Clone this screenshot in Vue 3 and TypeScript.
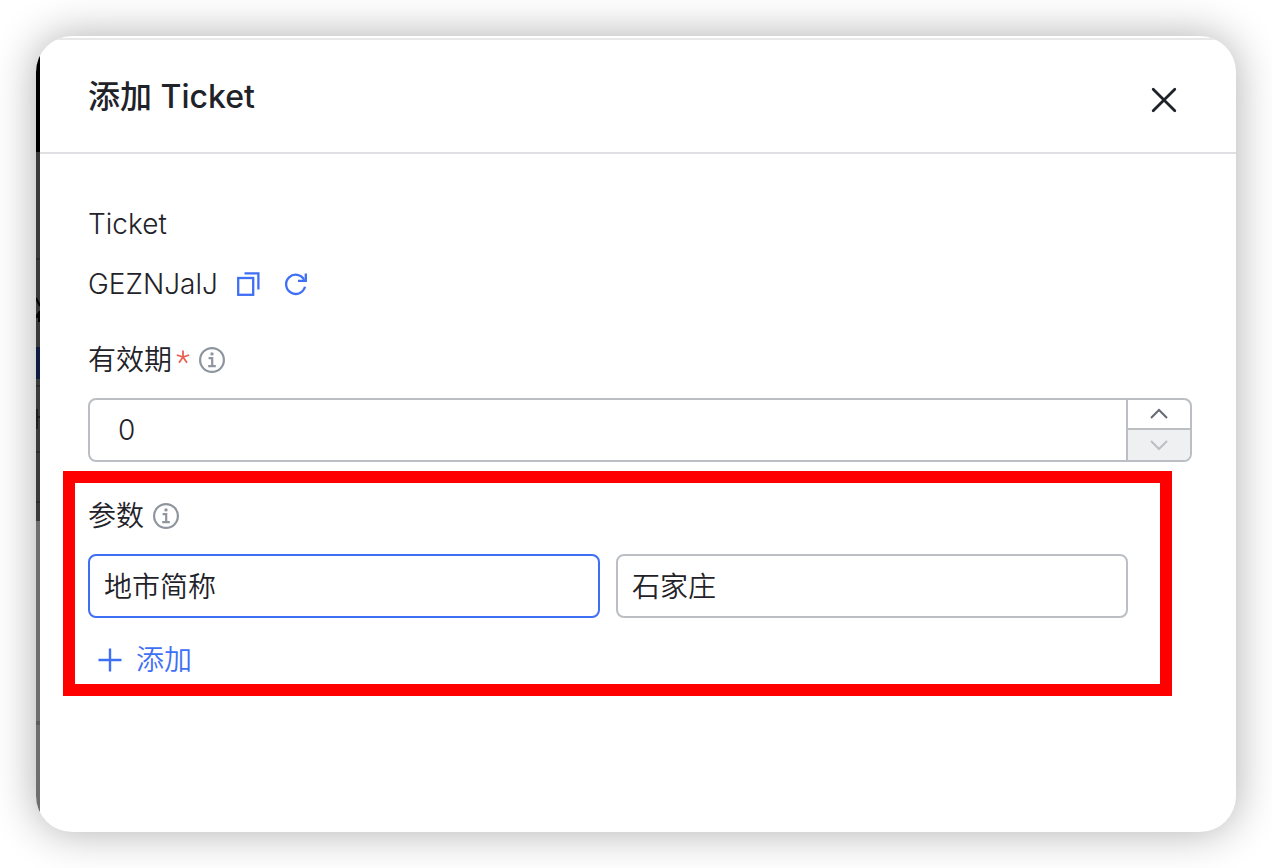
<script setup lang="ts">
import { ref } from 'vue'

interface Param {
  key: string
  value: string
}

const ticket = ref('GEZNJalJ')
const validity = ref('0')
const params = ref<Param[]>([{ key: '地市简称', value: '石家庄' }])

function step(delta: number): void {
  validity.value = String(Math.max(0, Number(validity.value) + delta))
}

function addParam(): void {
  params.value.push({ key: '', value: '' })
}

function regenerate(): void {
  const letters = 'ABCDEFGHJKLMNPQRSTUVWXYZabcdefghjkmnpqrstuvwxyz'
  ticket.value = Array.from({ length: 8 }, () => letters[Math.floor(Math.random() * letters.length)]).join('')
}

function copyTicket(): void {
  navigator.clipboard?.writeText(ticket.value)
}
</script>

<template>
  <main class="page">
    <div class="window">
      <svg class="edge" width="4" height="796" aria-hidden="true">
        <rect width="4" height="116" fill="#000" />
        <rect y="116" width="4" height="369" fill="#3a3a3a" />
        <rect y="485" width="4" height="311" fill="#6e6e6e" />
        <path d="M0 223h4M0 350h4M0 416h4M0 466h4" stroke="#2b2b2b" stroke-width="2" />
        <path d="M0 262l4 8M0 281l4-6M0 281h4M3 276v10" stroke="#000" stroke-width="2" fill="none" />
        <rect y="311" width="4" height="32" fill="#0f1c42" />
        <path d="M1 373v20M2 381h2" stroke="#1c1c1c" stroke-width="2" />
        <rect y="685" width="4" height="4" fill="#5c5c5c" />
      </svg>

      <section class="dialog" role="dialog" aria-labelledby="dialog-title">
        <header class="header">
          <h1 id="dialog-title" class="title">添加 Ticket</h1>
          <button class="icon-button close" type="button" aria-label="关闭">
            <svg width="32" height="32" viewBox="0 0 32 32" fill="none" stroke="#1f2329" stroke-width="2.8" stroke-linecap="round">
              <path d="M5.2 5.2l21.6 21.6M26.8 5.2L5.2 26.8" />
            </svg>
          </button>
        </header>

        <form class="body" @submit.prevent>
          <div class="field">
            <div class="label">Ticket</div>
            <div class="ticket">
              <output class="code">{{ ticket }}</output>
              <div class="actions">
                <button class="icon-button" type="button" aria-label="复制" @click="copyTicket">
                  <svg width="28" height="28" viewBox="0 0 28 28" fill="none" stroke="#3f6ff5" stroke-width="2.3">
                    <rect x="4.2" y="8" width="15" height="16.8" />
                    <path d="M10.5 3.4H24.4v16" />
                  </svg>
                </button>
                <button class="icon-button" type="button" aria-label="刷新" @click="regenerate">
                  <svg width="28" height="28" viewBox="0 0 28 28" fill="none" stroke="#3f6ff5" stroke-width="2.3">
                    <path d="M23 16.8A9.6 9.6 0 1 1 22.2 9.8" />
                    <path d="M23.8 3.6v7.2h-7.8" />
                  </svg>
                </button>
              </div>
            </div>
          </div>

          <div class="field">
            <div class="label">
              <label for="validity">有效期</label>
              <svg class="required" width="14" height="14" viewBox="0 0 14 14" fill="none" stroke="#e8604f" stroke-width="1.8" role="img" aria-label="必填">
                <path d="M7 .5V7M.8 5L7 7l6.2-2M3 12.8L7 7l4 5.8" />
              </svg>
              <svg class="info" width="28" height="28" viewBox="0 0 28 28" fill="none" stroke="#8f959e" stroke-width="2.2" aria-hidden="true">
                <circle cx="14" cy="14" r="11.9" />
                <path d="M10.6 12.2h3.6v8M10.2 20.2h7.6" />
                <circle cx="14" cy="7.9" r="1.7" fill="#8f959e" stroke="none" />
              </svg>
            </div>
            <div class="number">
              <input id="validity" v-model="validity" class="number-input" type="text" inputmode="numeric" />
              <div class="steps">
                <button class="step" type="button" aria-label="增加" @click="step(1)">
                  <svg width="18" height="12" viewBox="0 0 18 12" fill="none" stroke="#646a73" stroke-width="2">
                    <path d="M1 10l8-8 8 8" />
                  </svg>
                </button>
                <button class="step" type="button" aria-label="减少" :disabled="Number(validity) <= 0" @click="step(-1)">
                  <svg width="18" height="12" viewBox="0 0 18 12" fill="none" stroke="#bbbfc4" stroke-width="2">
                    <path d="M1 2l8 8 8-8" />
                  </svg>
                </button>
              </div>
            </div>
          </div>

          <div class="field highlighted">
            <div class="label">
              <span>参数</span>
              <svg class="info" width="28" height="28" viewBox="0 0 28 28" fill="none" stroke="#8f959e" stroke-width="2.2" aria-hidden="true">
                <circle cx="14" cy="14" r="11.9" />
                <path d="M10.6 12.2h3.6v8M10.2 20.2h7.6" />
                <circle cx="14" cy="7.9" r="1.7" fill="#8f959e" stroke="none" />
              </svg>
            </div>
            <div class="params">
              <div v-for="(param, i) in params" :key="i" class="pair">
                <input v-model="param.key" class="text-input" :class="{ active: i === 0 }" type="text" aria-label="参数名" />
                <input v-model="param.value" class="text-input" type="text" aria-label="参数值" />
              </div>
            </div>
            <button class="add" type="button" @click="addParam">
              <svg width="24" height="24" viewBox="0 0 24 24" fill="none" stroke="#3f6ff5" stroke-width="2.4" aria-hidden="true">
                <path d="M12 .5v23M.5 12h23" />
              </svg>
              <span>添加</span>
            </button>
          </div>
        </form>
      </section>
    </div>
  </main>
</template>

<style>
body {
  background: #fff;
}
</style>

<style scoped>
* {
  box-sizing: border-box;
}

.page {
  display: flex;
  min-height: 100vh;
  padding: 36px;
  color: #1f2329;
  font-family: Inter, "Noto Sans CJK SC", sans-serif;
  font-size: 28px;
  font-weight: 350;
  line-height: 44px;
}

.window {
  display: flex;
  flex: 1;
  overflow: hidden;
  border-radius: 36px;
  background: #fff;
  box-shadow: 0 0 44px rgba(0, 0, 0, 0.32);
}

.edge {
  flex: none;
}

.dialog {
  flex: 1;
  min-width: 0;
  padding-top: 2px;
}

.header {
  display: flex;
  align-items: center;
  justify-content: space-between;
  padding: 35px 56px 33px 48px;
  border-top: 2px solid #e8e8e8;
  border-bottom: 2px solid #dee0e3;
}

.title {
  margin: 0;
  font-size: 32px;
  font-weight: 500;
  line-height: 44px;
}

button,
input {
  margin: 0;
  color: inherit;
  font: inherit;
}

button {
  padding: 0;
  border: 0;
  background: none;
  cursor: pointer;
}

.icon-button {
  display: flex;
}

.close {
  margin-top: 6px;
}

.body {
  display: flex;
  flex-direction: column;
  gap: 32px;
  padding: 48px 44px 48px 48px;
}

.label {
  display: flex;
  align-items: center;
  margin-bottom: 16px;
}

.required {
  margin: 0 0 6px 4px;
}

.info {
  margin-left: 8px;
}

.ticket {
  display: flex;
  align-items: center;
  gap: 16px;
}

.actions {
  display: flex;
  gap: 20px;
}

.number {
  display: flex;
  height: 64px;
  overflow: hidden;
  border: 2px solid #bbbfc4;
  border-radius: 8px;
}

.number-input {
  flex: 1;
  min-width: 0;
  padding: 0 28px;
  border: 0;
  outline: none;
  background: none;
}

.steps {
  display: grid;
  grid-template-rows: 28px 32px;
  width: 64px;
  border-left: 2px solid #bbbfc4;
}

.step {
  display: flex;
  align-items: center;
  justify-content: center;
}

.step + .step {
  border-top: 2px solid #bbbfc4;
}

.step:disabled {
  background: #eff0f1;
  cursor: not-allowed;
}

.highlighted {
  position: relative;
}

.highlighted::after {
  position: absolute;
  inset: -23px 20px -14px -25px;
  border: 12px solid #f00;
  content: "";
  pointer-events: none;
}

.params {
  display: grid;
  gap: 16px;
  padding-right: 64px;
}

.pair {
  display: grid;
  grid-template-columns: 1fr 1fr;
  gap: 16px;
}

.text-input {
  width: 100%;
  height: 64px;
  padding: 0 14px 2px;
  border: 2px solid #bbbfc4;
  border-radius: 8px;
  outline: none;
  background: #fff;
}

.text-input.active,
.text-input:focus {
  border-color: #3f6ff5;
}

.add {
  display: flex;
  align-items: center;
  gap: 14px;
  margin-top: 20px;
  padding: 0 10px;
  color: #3f6ff5;
}
</style>
